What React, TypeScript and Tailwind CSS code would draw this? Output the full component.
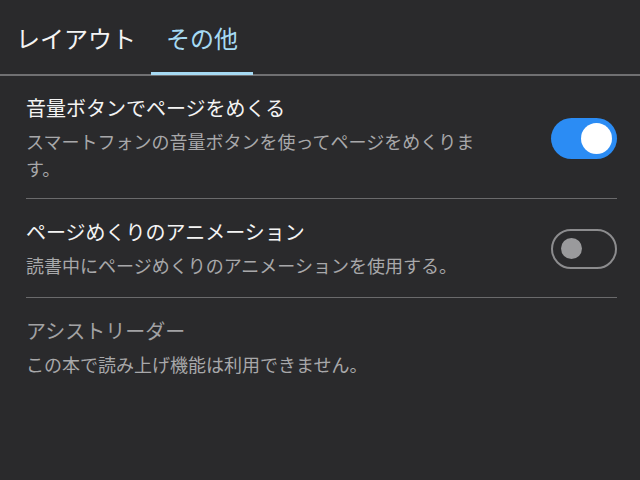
import React from "react";

function Toggle({ on }: { on: boolean }) {
  if (on) {
    return (
      <div className="flex h-[41px] w-[66px] shrink-0 items-center justify-end rounded-full bg-[#2b8cf4] pr-[5px]">
        <div className="h-[31px] w-[31px] rounded-full bg-white" />
      </div>
    );
  }
  return (
    <div className="flex h-[40px] w-[66px] shrink-0 items-center rounded-full border-2 border-[#8c8c8e] pl-[8px]">
      <div className="h-[21px] w-[21px] rounded-full bg-[#9a9a9c]" />
    </div>
  );
}

function Row({
  title,
  desc,
  toggle,
  disabled,
  last,
  pad,
}: {
  title: string;
  desc: string;
  toggle?: boolean;
  disabled?: boolean;
  last?: boolean;
  pad: string;
}) {
  return (
    <div
      className={
        "flex items-center gap-4 " +
        pad +
        " " +
        (last ? "" : "border-b border-[#6a6a6c]")
      }
    >
      <div className="flex min-w-0 flex-1 flex-col pr-[60px]">
        <div
          className={
            "text-[20px] leading-[28px] " +
            (disabled ? "text-[#a2a2a4]" : "text-[#f4f4f4]")
          }
        >
          {title}
        </div>
        <div className="mt-[6px] text-[18px] leading-[27px] text-[#a8a8aa]">
          {desc}
        </div>
      </div>
      {toggle !== undefined && <Toggle on={toggle} />}
    </div>
  );
}

export default function App() {
  return (
    <div
      className="h-[480px] w-[640px] bg-[#2a2a2c]"
      style={{ fontFamily: '"Noto Sans CJK JP", "Noto Sans", sans-serif' }}
    >
      <div className="flex h-[76px] items-stretch border-b-2 border-[#707072]">
        <div className="flex items-center pl-[16px] pr-[15px] pt-[2px] text-[24px] text-[#f4f4f4]">
          レイアウト
        </div>
        <div className="relative flex items-center px-[15px] pt-[2px] text-[24px] text-[#a6daf4]">
          その他
          <div className="absolute bottom-[-1px] left-0 right-0 h-[3px] bg-[#a6daf4]" />
        </div>
      </div>
      <div className="pl-[26px] pr-[23px]">
        <Row
          title="音量ボタンでページをめくる"
          desc="スマートフォンの音量ボタンを使ってページをめくります。"
          toggle={true}
          pad="pt-[18px] pb-[16px]"
        />
        <Row
          title="ページめくりのアニメーション"
          desc="読書中にページめくりのアニメーションを使用する。"
          toggle={false}
          pad="pt-[19px] pb-[18px]"
        />
        <Row
          title="アシストリーダー"
          desc="この本で読み上げ機能は利用できません。"
          disabled
          last
          pad="pt-[19px] pb-[18px]"
        />
      </div>
    </div>
  );
}
